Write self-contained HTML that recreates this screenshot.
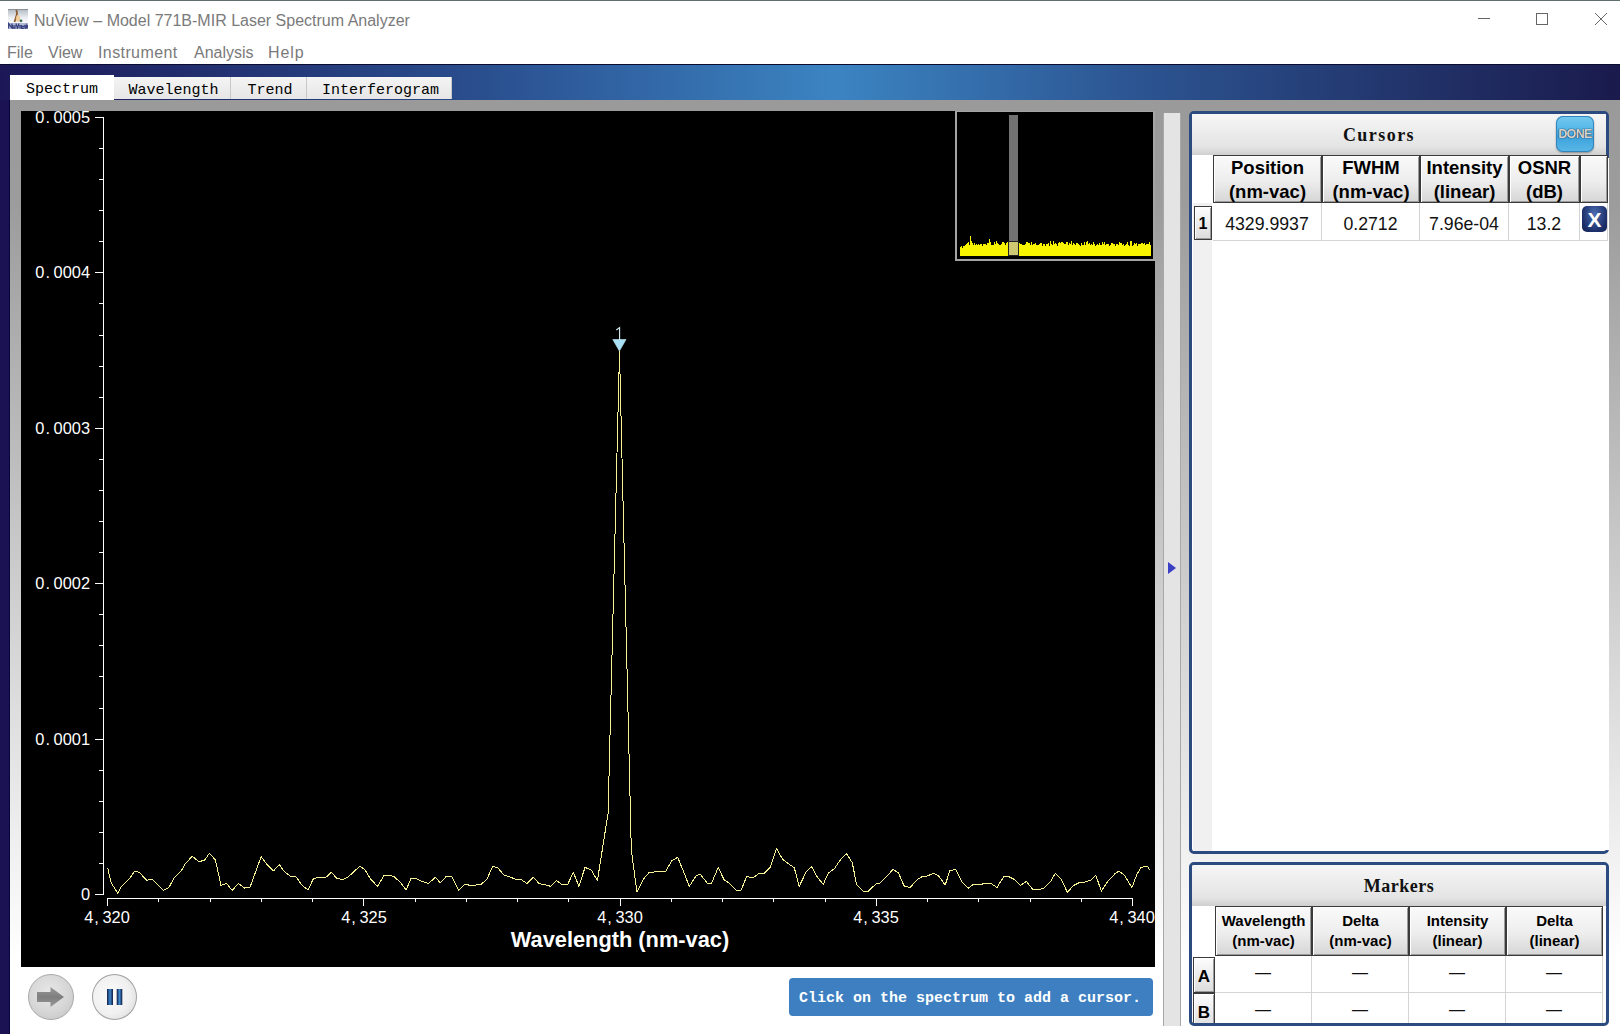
<!DOCTYPE html>
<html><head><meta charset="utf-8">
<style>
*{margin:0;padding:0;box-sizing:border-box}
html,body{width:1620px;height:1034px;overflow:hidden;background:#fff;position:relative;font-family:"Liberation Sans",sans-serif}
.a{position:absolute}
.topline{left:0;top:0;width:1620px;height:1px;background:#5f6e6e}
.title{left:34px;top:12px;font-size:16px;color:#7a7a7a;white-space:nowrap;letter-spacing:0}
.menu{top:44px;font-size:16px;color:#7a7a7a;white-space:nowrap}
.band{left:0;top:64px;width:1620px;height:36px;border-top:1px solid #0c0c30;background:linear-gradient(to right,#1c1858 0%,#2a4f8f 30%,#3c84c2 51.5%,#2c5592 70%,#1a1a4c 100%)}
.lstrip{left:0;top:100px;width:10px;height:934px;background:#1a1252;border-right:1px solid #06063a}
.panel{left:10px;top:100px;width:1610px;height:934px;background:linear-gradient(to bottom,#9a9a9a 0%,#9c9c9c 11%,#b4b4b4 31%,#dcdcdc 64%,#f6f6f6 85%,#ffffff 92%)}
.tab{top:77px;height:22px;background:linear-gradient(#f4f4f4,#e6e6e6);font-family:"Liberation Mono",monospace;font-size:15px;color:#000;text-align:center;line-height:28px;border-right:1px solid #c8c8c8;padding-left:3px}
.tab.act{top:75px;height:25px;background:#fff;border:none;line-height:30px;padding-left:0}
.plot{left:21px;top:111px;width:1134px;height:856px;background:#000}
.mono{font-family:"Liberation Mono",monospace}
.ylab{font-family:"Liberation Sans",sans-serif;color:#fff;font-size:16.4px;white-space:nowrap;text-align:right;width:80px;left:10px;line-height:17px}
.xlab{font-family:"Liberation Sans",sans-serif;color:#fff;font-size:16.4px;white-space:nowrap;text-align:center;width:80px;line-height:17px}
.c9{display:inline-block;width:9.1px;text-align:left;padding-left:1px}
</style></head><body>
<style>
.split{left:1163px;top:113px;width:18px;height:913px;background:#e4e4e4;border-left:1px solid #a8a8a8;border-right:1px solid #a8a8a8}
.cpanel{left:1189px;top:111px;width:420px;height:743px;border:3px solid #2a4a80;border-radius:5px;background:#fff;overflow:visible}
.mpanel{left:1189px;top:862px;width:420px;height:164px;border:3px solid #2a4a80;border-radius:5px;background:#fff;overflow:hidden}
.phead{background:linear-gradient(to bottom,#f6f6f6 0%,#ececec 45%,#e4e4e4 80%,#cfcfcf 100%);font-family:"Liberation Serif",serif;font-weight:bold;font-size:18px;text-align:center;color:#111}
.hc{background:linear-gradient(to bottom,#fafafa 0%,#ededed 55%,#d6d6d6 100%);border:1px solid #3a3a3a;box-shadow:inset 1px 1px 0 #fff,inset -1px -1px 0 #9a9a9a;font-weight:bold;text-align:center;color:#000;line-height:24px;font-size:18.5px}
.mhc{font-size:15px;line-height:20px}
.dc{border-right:1px solid #d4d4d4;border-bottom:1px solid #d4d4d4;text-align:center;color:#111;font-size:17.7px;line-height:42px}
.gut{background:linear-gradient(to bottom,#fdfdfd,#dcdcdc);border:1px solid #3a3a3a;box-shadow:inset 1px 1px 0 #fff,inset -1px -1px 0 #9a9a9a;font-weight:bold;text-align:center;font-size:16px}
.md{line-height:34px;font-size:16px}
.dash{text-align:center;color:#222;font-size:15px}
</style>
<div class="a topline"></div>
<!-- title bar -->
<svg class="a" style="left:8px;top:9px" width="20" height="20">
<defs><linearGradient id="ig" x1="0" y1="0" x2="0" y2="1"><stop offset="0" stop-color="#6a6e74"/><stop offset="0.06" stop-color="#b8c0c8"/><stop offset="0.45" stop-color="#eef0f4"/><stop offset="0.7" stop-color="#f6f8fa"/><stop offset="1" stop-color="#e8eaf0"/></linearGradient></defs>
<rect width="20" height="20" fill="url(#ig)"/>
<path d="M8.5 1 L9 5 L6.5 13" stroke="#8a5a30" stroke-width="1.8" fill="none"/>
<ellipse cx="10" cy="9.5" rx="2.2" ry="3.5" fill="#f0c890" opacity="0.85"/>
<circle cx="13" cy="11.8" r="1.4" fill="#3a6a50"/>
<rect x="0" y="14" width="20" height="6" fill="#b0b8d4"/>
<path d="M0.5 19.5 V14.5 L4 19 V14.5 M5 16 V19 H7 V16 M8 14.5 L9.5 19.5 L11 14.5 M12 16 V19.5 M13.5 17.5 H16 M13.5 16 V19.5 H16 M16.5 16 L17.3 19.5 L18.2 16.5 L19 19.5 L19.8 16" stroke="#3a4480" stroke-width="1.3" fill="none"/>
</svg>
<div class="a title">NuView – Model 771B-MIR Laser Spectrum Analyzer</div>
<svg class="a" style="left:0;top:0" width="1620" height="40">
<line x1="1478" y1="18.5" x2="1490" y2="18.5" stroke="#666" stroke-width="1"/>
<rect x="1536.5" y="13.5" width="11" height="11" fill="none" stroke="#666" stroke-width="1"/>
<path d="M1595 13 L1607 25 M1607 13 L1595 25" stroke="#666" stroke-width="1"/>
</svg>
<div class="a menu" style="left:7px">File</div>
<div class="a menu" style="left:48px">View</div>
<div class="a menu" style="left:98px;letter-spacing:0.4px">Instrument</div>
<div class="a menu" style="left:194px">Analysis</div>
<div class="a menu" style="left:268px;letter-spacing:0.9px">Help</div>
<!-- band -->
<div class="a band"></div>
<div class="a lstrip"></div>
<div class="a panel"></div>
<div class="a tab act" style="left:10px;width:104px">Spectrum</div>
<div class="a tab" style="left:114px;width:117px">Wavelength</div>
<div class="a tab" style="left:231px;width:76px">Trend</div>
<div class="a tab" style="left:307px;width:145px">Interferogram</div>
<!-- plot -->
<div class="a plot"></div>
<svg class="a" style="left:0;top:0" width="1620" height="1034">
<g stroke="#fff" stroke-width="1" shape-rendering="crispEdges">
<line x1="103.5" y1="117" x2="103.5" y2="895"/>
<line x1="107" y1="898.5" x2="1133" y2="898.5"/>
<line x1="95" y1="117.5" x2="103" y2="117.5"/>
<line x1="99" y1="148.5" x2="103" y2="148.5"/>
<line x1="99" y1="179.5" x2="103" y2="179.5"/>
<line x1="99" y1="210.5" x2="103" y2="210.5"/>
<line x1="99" y1="241.5" x2="103" y2="241.5"/>
<line x1="95" y1="272.5" x2="103" y2="272.5"/>
<line x1="99" y1="303.5" x2="103" y2="303.5"/>
<line x1="99" y1="335.5" x2="103" y2="335.5"/>
<line x1="99" y1="366.5" x2="103" y2="366.5"/>
<line x1="99" y1="397.5" x2="103" y2="397.5"/>
<line x1="95" y1="428.5" x2="103" y2="428.5"/>
<line x1="99" y1="459.5" x2="103" y2="459.5"/>
<line x1="99" y1="490.5" x2="103" y2="490.5"/>
<line x1="99" y1="521.5" x2="103" y2="521.5"/>
<line x1="99" y1="552.5" x2="103" y2="552.5"/>
<line x1="95" y1="583.5" x2="103" y2="583.5"/>
<line x1="99" y1="614.5" x2="103" y2="614.5"/>
<line x1="99" y1="645.5" x2="103" y2="645.5"/>
<line x1="99" y1="676.5" x2="103" y2="676.5"/>
<line x1="99" y1="708.5" x2="103" y2="708.5"/>
<line x1="95" y1="739.5" x2="103" y2="739.5"/>
<line x1="99" y1="770.5" x2="103" y2="770.5"/>
<line x1="99" y1="801.5" x2="103" y2="801.5"/>
<line x1="99" y1="832.5" x2="103" y2="832.5"/>
<line x1="99" y1="863.5" x2="103" y2="863.5"/>
<line x1="95" y1="894.5" x2="103" y2="894.5"/>
<line x1="107.5" y1="898" x2="107.5" y2="906"/>
<line x1="158.5" y1="898" x2="158.5" y2="902"/>
<line x1="210.5" y1="898" x2="210.5" y2="902"/>
<line x1="261.5" y1="898" x2="261.5" y2="902"/>
<line x1="312.5" y1="898" x2="312.5" y2="902"/>
<line x1="363.5" y1="898" x2="363.5" y2="906"/>
<line x1="415.5" y1="898" x2="415.5" y2="902"/>
<line x1="466.5" y1="898" x2="466.5" y2="902"/>
<line x1="517.5" y1="898" x2="517.5" y2="902"/>
<line x1="568.5" y1="898" x2="568.5" y2="902"/>
<line x1="620.5" y1="898" x2="620.5" y2="906"/>
<line x1="671.5" y1="898" x2="671.5" y2="902"/>
<line x1="722.5" y1="898" x2="722.5" y2="902"/>
<line x1="773.5" y1="898" x2="773.5" y2="902"/>
<line x1="825.5" y1="898" x2="825.5" y2="902"/>
<line x1="876.5" y1="898" x2="876.5" y2="906"/>
<line x1="927.5" y1="898" x2="927.5" y2="902"/>
<line x1="978.5" y1="898" x2="978.5" y2="902"/>
<line x1="1030.5" y1="898" x2="1030.5" y2="902"/>
<line x1="1081.5" y1="898" x2="1081.5" y2="902"/>
<line x1="1132.5" y1="898" x2="1132.5" y2="906"/>
</g>
<polyline points="107.7,868.1 111.1,882.6 117.7,893.3 121.6,886.3 129.3,878.9 134.6,871.1 139.3,872.5 146.7,880.1 152.5,879.5 163.6,890.4 169.1,887.2 173.8,878.3 182.1,869.6 185.4,863.5 192.3,856.3 198.8,861.6 204.3,860.4 209.5,853.3 215.4,860 221,885.4 226.5,883.5 232.3,890.4 238.3,883.5 244.7,888.1 250,887.2 261.1,856.7 266.7,864.1 273.5,870.9 279.3,864.7 284.6,871.9 290.7,876.4 295.7,876.4 302.4,885.7 308,890 313.3,878.9 319.1,877 325.2,878 331.4,872.3 336.4,878 342.5,879.8 348.1,877 359.8,866.2 364.8,869.4 370.9,879.5 377.5,886.3 383.9,875.6 390,875.6 393.8,876.4 400.6,882.6 406.1,890 411,878.5 416.6,878.9 422.2,881.4 428.3,883.5 435.5,877.3 440.4,883 446.2,876.4 451.8,876.4 458.6,890.4 464.8,884.2 470.3,885.4 475.9,885 481.2,884.2 487,879.3 492.5,866.5 497.4,867.4 504.2,875.2 509.8,876.8 516.5,879.8 520.9,879.5 527,883.5 533.2,877.3 539.4,883.8 544.9,884.7 550.5,886.3 556.4,880.5 562.6,885 567.8,884.2 573.3,872.3 578.9,886.3 585,867.4 591.2,869.9 597.4,880.7 608.1,813 619.5,352 631.3,850 636.9,891.9 643.1,879.5 649.3,872.3 655.4,871.9 660.4,871.5 665.9,871.1 671.5,861 677.7,857.3 683.8,872.3 689.3,886.3 696.1,875.8 700.4,874.3 707.2,883.2 711.5,883.2 718.3,867.4 723.9,879.5 729.4,883.2 736.2,890 741.2,890 746.7,876.4 752.9,878 759.1,873.3 764.6,873.1 770.2,867.4 776.4,848.4 782.5,859.1 788.1,863.5 794.3,867.8 799.2,886.3 806,872.3 811.5,866.5 817.7,877.7 823.3,884.2 828.2,873.3 834.4,868.6 840.6,859.5 846.5,853.6 852.3,862.8 856.6,884.7 863.4,891.2 868.3,891.2 876.4,883.5 880.1,883.2 886.2,877 893,869.4 898.5,873.1 904.1,885.9 910.2,887.5 917,879.8 922.6,876.4 927.5,876 933.1,873.3 938.6,875.8 945.2,885 949.8,870.9 955.9,869.4 961.5,881.4 968.3,888.1 973.8,884.2 979.4,884.7 984.9,883.5 991.1,883.5 997,887.5 1003.5,877 1009,876.8 1014,879.3 1020.7,885.4 1026.3,881.4 1032.5,889.1 1037.4,890 1043.7,888.3 1050.4,881.9 1055.2,873.5 1061.5,879.6 1067.4,892.4 1073.3,885.6 1079.6,882.4 1084.4,882.2 1090.4,880.4 1095.9,875.4 1101.3,891.1 1107.4,881.9 1114.8,873.9 1118.9,871.1 1124.1,874.8 1131.9,887.6 1137,874.1 1141.1,867.4 1147.4,866.3 1149.6,869.6" fill="none" stroke="#f5f194" stroke-width="1" stroke-linejoin="round" shape-rendering="crispEdges"/>
<polygon points="612.8,339.5 626,339.5 619.4,351" fill="#a8e0f6" stroke="#c8f0ff" stroke-width="0.6"/>
<path d="M616.3 330 L619.6 327.5 L619.6 340" stroke="#d6eef8" stroke-width="1.1" fill="none"/>
</svg>
<div class="a ylab" style="top:109px">0<span class="c9">.</span>0005</div>
<div class="a ylab" style="top:264px">0<span class="c9">.</span>0004</div>
<div class="a ylab" style="top:420px">0<span class="c9">.</span>0003</div>
<div class="a ylab" style="top:575px">0<span class="c9">.</span>0002</div>
<div class="a ylab" style="top:731px">0<span class="c9">.</span>0001</div>
<div class="a ylab" style="top:886px">0</div>
<div class="a xlab" style="left:67px;top:909px">4<span class="c9">,</span>320</div>
<div class="a xlab" style="left:324px;top:909px">4<span class="c9">,</span>325</div>
<div class="a xlab" style="left:580px;top:909px">4<span class="c9">,</span>330</div>
<div class="a xlab" style="left:836px;top:909px">4<span class="c9">,</span>335</div>
<div class="a xlab" style="left:1092px;top:909px">4<span class="c9">,</span>340</div>
<div class="a" style="left:420px;top:927px;width:400px;text-align:center;color:#fff;font-weight:bold;font-size:21.8px;white-space:nowrap">Wavelength (nm-vac)</div>
<!-- splitter -->
<div class="a split"></div>
<svg class="a" style="left:1166px;top:560px" width="12" height="16"><polygon points="2,2 10,8 2,14" fill="#3b3fc4"/></svg>
<!-- cursors panel -->
<div class="a cpanel">
  <div class="a phead" style="left:0;top:0;width:414px;height:41px;line-height:42px"><span style="position:relative;left:-20px;letter-spacing:1.45px">Cursors</span></div>
  <div class="a" style="left:413px;top:44px;width:4px;height:692px;background:#fff"></div>
  <div class="a" style="left:1px;top:41px;width:19px;height:696px;background:#f0f0f0"></div>
  <div class="a" style="left:0;top:41px;width:20px;height:48px;background:#fff"></div>
  <div class="a hc" style="left:21px;top:41px;width:109px;height:48px">Position<br>(nm-vac)</div>
  <div class="a hc" style="left:130px;top:41px;width:98px;height:48px">FWHM<br>(nm-vac)</div>
  <div class="a hc" style="left:228px;top:41px;width:89px;height:48px">Intensity<br>(linear)</div>
  <div class="a hc" style="left:317px;top:41px;width:71px;height:48px">OSNR<br>(dB)</div>
  <div class="a hc" style="left:388px;top:41px;width:28px;height:48px"></div>
  <div class="a gut" style="left:2px;top:92px;width:18px;height:34px;line-height:34px">1</div>
  <div class="a" style="left:20px;top:89px;width:396px;height:38px;background:#fff"></div>
  <div class="a dc" style="left:21px;top:89px;width:109px;height:38px">4329.9937</div>
  <div class="a dc" style="left:130px;top:89px;width:98px;height:38px">0.2712</div>
  <div class="a dc" style="left:228px;top:89px;width:89px;height:38px">7.96e-04</div>
  <div class="a dc" style="left:317px;top:89px;width:71px;height:38px">13.2</div>
  <div class="a dc" style="left:388px;top:89px;width:28px;height:38px"></div>
  <div class="a" style="left:390px;top:92px;width:25px;height:26px;border-radius:5px;background:radial-gradient(ellipse at 50% 30%,#4a6cb0,#1c2f6a 70%,#142250);color:#fff;font-weight:bold;font-size:21px;line-height:27px;text-align:center">X</div>
</div>
<div class="a" style="left:1556px;top:116px;width:38px;height:36px;border-radius:7px;background:linear-gradient(to bottom,#74c9ef 0%,#52b6e8 40%,#3ea3dd 60%,#5ab8e6 100%);box-shadow:inset 0 0 0 1px #3384bd,0 1px 2px rgba(0,0,0,.35);color:#d4d4d4;font-weight:bold;font-size:12.5px;line-height:36px;text-align:center;letter-spacing:-0.6px;text-shadow:0 0 1px #1a2a3a,0 0 1px #1a2a3a">DONE</div>
<!-- markers panel -->
<div class="a mpanel">
  <div class="a phead" style="left:0;top:0;width:414px;height:41px;line-height:42px"><span style="letter-spacing:0.5px">Markers</span></div>
  <div class="a hc mhc" style="left:23px;top:41px;width:97px;height:50px;padding-top:4px">Wavelength<br>(nm-vac)</div>
  <div class="a hc mhc" style="left:120px;top:41px;width:97px;height:50px;padding-top:4px">Delta<br>(nm-vac)</div>
  <div class="a hc mhc" style="left:217px;top:41px;width:97px;height:50px;padding-top:4px">Intensity<br>(linear)</div>
  <div class="a hc mhc" style="left:314px;top:41px;width:97px;height:50px;padding-top:4px">Delta<br>(linear)</div>
  <div class="a gut" style="left:1px;top:92px;width:22px;height:36px;line-height:38px;font-size:17px">A</div>
  <div class="a gut" style="left:1px;top:128px;width:22px;height:36px;line-height:38px;font-size:17px">B</div>
  <div class="a dc md" style="left:23px;top:91px;width:97px;height:37px">—</div>
  <div class="a dc md" style="left:120px;top:91px;width:97px;height:37px">—</div>
  <div class="a dc md" style="left:217px;top:91px;width:97px;height:37px">—</div>
  <div class="a dc md" style="left:314px;top:91px;width:97px;height:37px">—</div>
  <div class="a dc md" style="left:23px;top:128px;width:97px;height:37px">—</div>
  <div class="a dc md" style="left:120px;top:128px;width:97px;height:37px">—</div>
  <div class="a dc md" style="left:217px;top:128px;width:97px;height:37px">—</div>
  <div class="a dc md" style="left:314px;top:128px;width:97px;height:37px">—</div>
</div>
<!-- minimap -->
<div class="a" style="left:955px;top:111px;width:200px;height:150px;border:2px solid #a4a4a4;border-top-width:1px;background:#000"></div>
<svg class="a" style="left:0;top:0" width="1620" height="300">
<polygon points="960,256 960,247.0 961,247.0 961,246.3 962,246.3 962,247.5 963,247.5 963,246.0 964,246.0 964,246.2 965,246.2 965,244.7 966,244.7 966,244.0 967,244.0 967,243.0 968,243.0 968,242.1 969,242.1 969,244.8 970,244.8 970,236.0 971,236.0 971,241.4 972,241.4 972,243.0 973,243.0 973,244.8 974,244.8 974,243.0 975,243.0 975,244.8 976,244.8 976,243.9 977,243.9 977,244.8 978,244.8 978,243.9 979,243.9 979,244.8 980,244.8 980,243.9 981,243.9 981,243.9 982,243.9 982,245.7 983,245.7 983,243.9 984,243.9 984,243.9 985,243.9 985,243.9 986,243.9 986,244.8 987,244.8 987,243.0 988,243.0 988,243.0 989,243.0 989,239.0 990,239.0 990,242.1 991,242.1 991,244.8 992,244.8 992,244.8 993,244.8 993,244.8 994,244.8 994,242.1 995,242.1 995,243.9 996,243.9 996,241.4 997,241.4 997,243.0 998,243.0 998,243.9 999,243.9 999,244.8 1000,244.8 1000,244.8 1001,244.8 1001,243.9 1002,243.9 1002,242.1 1003,242.1 1003,242.1 1004,242.1 1004,243.0 1005,243.0 1005,244.8 1006,244.8 1006,243.0 1007,243.0 1007,242.1 1008,242.1 1008,244.8 1009,244.8 1009,241.4 1010,241.4 1010,243.9 1011,243.9 1011,242.3 1012,242.3 1012,244.8 1013,244.8 1013,244.8 1014,244.8 1014,243.9 1015,243.9 1015,244.8 1016,244.8 1016,243.0 1017,243.0 1017,245.7 1018,245.7 1018,243.9 1019,243.9 1019,243.0 1020,243.0 1020,243.9 1021,243.9 1021,243.9 1022,243.9 1022,244.8 1023,244.8 1023,244.8 1024,244.8 1024,244.8 1025,244.8 1025,243.9 1026,243.9 1026,242.1 1027,242.1 1027,242.3 1028,242.3 1028,243.0 1029,243.0 1029,243.0 1030,243.0 1030,244.8 1031,244.8 1031,242.1 1032,242.1 1032,244.8 1033,244.8 1033,243.9 1034,243.9 1034,243.9 1035,243.9 1035,243.0 1036,243.0 1036,244.8 1037,244.8 1037,244.8 1038,244.8 1038,244.8 1039,244.8 1039,243.9 1040,243.9 1040,243.0 1041,243.0 1041,243.0 1042,243.0 1042,245.7 1043,245.7 1043,243.9 1044,243.9 1044,243.9 1045,243.9 1045,245.7 1046,245.7 1046,243.9 1047,243.9 1047,243.9 1048,243.9 1048,243.0 1049,243.0 1049,245.7 1050,245.7 1050,240.5 1051,240.5 1051,243.9 1052,243.9 1052,244.8 1053,244.8 1053,241.4 1054,241.4 1054,243.9 1055,243.9 1055,243.0 1056,243.0 1056,243.9 1057,243.9 1057,245.7 1058,245.7 1058,243.0 1059,243.0 1059,242.1 1060,242.1 1060,243.0 1061,243.0 1061,242.3 1062,242.3 1062,242.1 1063,242.1 1063,243.0 1064,243.0 1064,243.9 1065,243.9 1065,243.9 1066,243.9 1066,242.1 1067,242.1 1067,242.1 1068,242.1 1068,244.8 1069,244.8 1069,243.0 1070,243.0 1070,243.9 1071,243.9 1071,241.4 1072,241.4 1072,244.8 1073,244.8 1073,243.0 1074,243.0 1074,243.9 1075,243.9 1075,244.8 1076,244.8 1076,243.0 1077,243.0 1077,243.0 1078,243.0 1078,243.9 1079,243.9 1079,244.8 1080,244.8 1080,245.7 1081,245.7 1081,243.0 1082,243.0 1082,244.8 1083,244.8 1083,244.8 1084,244.8 1084,242.1 1085,242.1 1085,244.8 1086,244.8 1086,242.1 1087,242.1 1087,240.5 1088,240.5 1088,243.9 1089,243.9 1089,243.0 1090,243.0 1090,244.8 1091,244.8 1091,243.9 1092,243.9 1092,244.8 1093,244.8 1093,242.1 1094,242.1 1094,243.9 1095,243.9 1095,245.7 1096,245.7 1096,244.8 1097,244.8 1097,243.9 1098,243.9 1098,244.8 1099,244.8 1099,243.0 1100,243.0 1100,244.8 1101,244.8 1101,244.8 1102,244.8 1102,242.3 1103,242.3 1103,243.9 1104,243.9 1104,242.3 1105,242.3 1105,244.8 1106,244.8 1106,243.9 1107,243.9 1107,243.9 1108,243.9 1108,243.9 1109,243.9 1109,245.7 1110,245.7 1110,244.8 1111,244.8 1111,243.0 1112,243.0 1112,243.0 1113,243.0 1113,243.9 1114,243.9 1114,243.9 1115,243.9 1115,245.7 1116,245.7 1116,243.9 1117,243.9 1117,243.9 1118,243.9 1118,244.8 1119,244.8 1119,242.1 1120,242.1 1120,243.0 1121,243.0 1121,243.0 1122,243.0 1122,244.8 1123,244.8 1123,243.9 1124,243.9 1124,245.7 1125,245.7 1125,244.8 1126,244.8 1126,243.9 1127,243.9 1127,242.1 1128,242.1 1128,244.8 1129,244.8 1129,245.7 1130,245.7 1130,241.0 1131,241.0 1131,241.4 1132,241.4 1132,245.7 1133,245.7 1133,244.8 1134,244.8 1134,243.0 1135,243.0 1135,243.9 1136,243.9 1136,243.0 1137,243.0 1137,245.7 1138,245.7 1138,243.9 1139,243.9 1139,243.9 1140,243.9 1140,243.9 1141,243.9 1141,243.0 1142,243.0 1142,243.0 1143,243.0 1143,243.9 1144,243.9 1144,243.0 1145,243.0 1145,244.8 1146,244.8 1146,243.9 1147,243.9 1147,243.9 1148,243.9 1148,243.9 1149,243.9 1149,242.1 1150,242.1 1150,244.8 1151,244.8 1151,256" fill="#f8f400" shape-rendering="crispEdges"/>
<rect x="1009" y="115" width="9" height="140" fill="#727272"/>
<rect x="1009" y="242" width="9" height="13" fill="#cfc873"/>
<rect x="1008.5" y="241.5" width="10" height="14" fill="none" stroke="#222" stroke-width="1"/>
</svg>
<!-- bottom buttons -->
<div class="a" style="left:28px;top:974px;width:46px;height:46px;border-radius:50%;background:radial-gradient(circle at 45% 40%,#e8e8e8 0%,#d6d6d6 55%,#c0c0c0 100%);border:1px solid #a8a8a8"></div>
<svg class="a" style="left:28px;top:974px" width="46" height="46"><defs><linearGradient id="ag" x1="0" y1="0" x2="0" y2="1"><stop offset="0" stop-color="#9a9a9a"/><stop offset="0.5" stop-color="#7e7e7e"/><stop offset="1" stop-color="#9a9a9a"/></linearGradient></defs><path d="M9 18 H22.5 V13 L36 23 L22.5 33 V28 H9 Z" fill="url(#ag)"/></svg>
<div class="a" style="left:92px;top:974px;width:45px;height:46px;border-radius:50%;background:radial-gradient(circle at 40% 45%,#fbfbfb 0%,#f0f0f0 55%,#d4d4d4 100%);border:1.5px solid #a0a0a0"></div>
<svg class="a" style="left:92px;top:974px" width="46" height="46"><defs><linearGradient id="pg" x1="0" y1="0" x2="1" y2="0"><stop offset="0" stop-color="#141a40"/><stop offset="0.5" stop-color="#3a8ad0"/><stop offset="1" stop-color="#141a40"/></linearGradient></defs><rect x="15" y="15" width="6" height="16" fill="url(#pg)"/><rect x="24.7" y="15" width="5.6" height="16" fill="url(#pg)"/></svg>
<div class="a mono" style="left:789px;top:978px;width:364px;height:38px;border-radius:4px;background:#3d7fc1;color:#fff;font-weight:bold;font-size:15px;line-height:42px;padding-left:10px;white-space:nowrap">Click on the spectrum to add a cursor.</div>
